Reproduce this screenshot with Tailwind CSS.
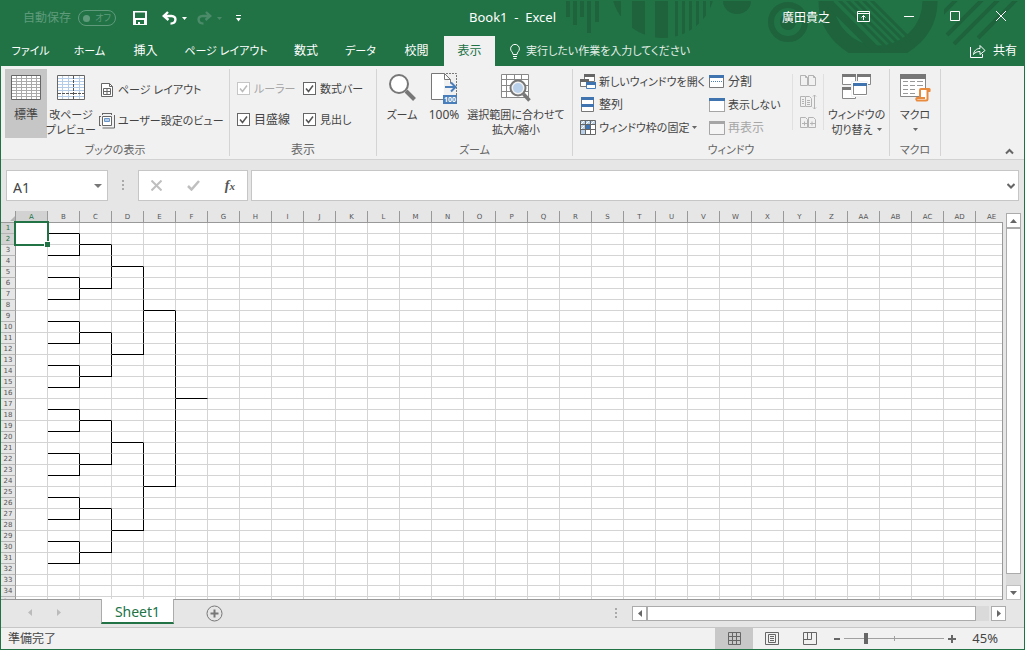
<!DOCTYPE html>
<html lang="ja">
<head>
<meta charset="utf-8">
<meta name="viewport" content="width=device-width, initial-scale=1">
<title>Book1 - Excel</title>
<script src="https://cdn.jsdelivr.net/npm/@tailwindcss/browser@4"></script>
</head>
<body class="h-screen overflow-hidden font-['Noto_Sans','Noto_Sans_CJK_JP',sans-serif] text-xs text-[#444] [font-feature-settings:'palt'] [&_button]:shrink-0 [&_svg]:shrink-0">
<div class="flex h-full flex-col border border-t-0 border-[#217346] bg-[#e6e6e6]">

  <header class="relative shrink-0 bg-[#217346] text-white">
    <svg class="absolute top-0 right-0 h-[66px] w-[474px]" viewBox="0 0 474 66" fill="#1e633c" aria-hidden="true">
      <defs>
        <clipPath id="bowl"><path d="M61 1H165V38H61Z"/></clipPath>
        <clipPath id="disc"><circle cx="113" cy="-14" r="52"/></clipPath>
        <clipPath id="flat"><path d="M260 1H400V53H260Z"/></clipPath>
        <clipPath id="inner"><path d="M270 1H374A46 46 0 0 1 328 53H310A60 60 0 0 1 270 16Z"/></clipPath>
        <clipPath id="slashes"><path d="M394 1H474V50H394Z"/></clipPath>
      </defs>
      <path d="M16 1h4v16h-4zM23 1h4v24h-4zM30 1h4v16h-4zM37 1h4v32h-4zM45 1h4v21h-4z"/>
      <g clip-path="url(#bowl)"><path clip-path="url(#disc)" d="M60 1h11v40H60zM82 1h13v40H82zM105 1h13v40h-13zM125 1h3v40h-3zM132 1h3v40h-3zM139 1h3v40h-3zM146 1h3v40h-3zM153 1h3v40h-3zM160 1h3v40h-3z"/></g>
      <path d="M173 1A14 13 0 0 0 201 1Z"/>
      <circle cx="238" cy="22" r="17" fill="none" stroke="#1e633c" stroke-width="6"/><circle cx="238" cy="22" r="8"/>
      <g clip-path="url(#flat)"><circle cx="328" cy="1" r="52" fill="none" stroke="#1e633c" stroke-width="15"/></g>
      <g clip-path="url(#inner)" stroke="#1e633c" fill="none"><path stroke-width="8" d="M274-2l60 60"/><path stroke-width="3" d="M287-2l58 58M295-2l58 58M303-2l56 56M311-2l54 54M319-2l50 50"/></g>
      <g clip-path="url(#slashes)" stroke="#1e633c" stroke-width="4"><path d="M392 14l16-16M397 35l36-36M404 44l48-48M428 38l40-40"/></g>
    </svg>

    <div class="relative flex h-9 items-center">
      <div class="flex h-full flex-1 items-center">
        <span class="ml-[22px] text-[#5f9b7b]">自動保存</span>
        <span class="ml-[7px] flex h-4 w-[38px] items-center justify-between rounded-full border border-[#5f9b7b] px-1 text-[9px] text-[#5f9b7b]"><span class="size-[7px] rounded-full bg-[#5f9b7b]"></span>オフ</span>
        <button aria-label="上書き保存" class="ml-[17px]"><svg class="size-[14px]" viewBox="0 0 14 14" fill="#fff"><path fill-rule="evenodd" d="M0 0h14v14H0zM2 1.500v5.500h10V1.500zM3 9v4h2v-2h2v2h4V9z"/></svg></button>
        <button aria-label="元に戻す" class="ml-[15px]"><svg class="h-[14px] w-[15px]" viewBox="0 0 15 14" fill="none" stroke="#fff" stroke-width="2.400"><path d="M6 1L1.800 5L6.500 9M2 5H9.500C15 5 14.800 12.500 8.500 12.600"/></svg></button>
        <svg class="ml-[5px] h-[3px] w-[5px]" viewBox="0 0 5 3" fill="#fff"><path d="M0 0h5L2.500 3z"/></svg>
        <button aria-label="やり直し" class="ml-[10px]"><svg class="h-[14px] w-[15px]" viewBox="0 0 15 14" fill="none" stroke="#4b8b69" stroke-width="2.400"><path d="M9 1L13.200 5L8.500 9M13 5H5.500C0 5 .2 12.500 6.500 12.600"/></svg></button>
        <svg class="ml-[5px] h-[3px] w-[5px]" viewBox="0 0 5 3" fill="#4b8b69"><path d="M0 0h5L2.500 3z"/></svg>
        <button aria-label="クイック アクセス ツール バーのユーザー設定" class="ml-[14px]"><svg class="h-[7px] w-[5px]" viewBox="0 0 5 7" fill="#fff"><path d="M0 0h5v1H0zM0 3h5L2.500 6.500z"/></svg></button>
      </div>
      <h1 class="text-[13px] whitespace-pre">Book1  -  Excel</h1>
      <div class="flex h-full flex-1 items-center justify-end">
        <span>廣田貴之</span>
        <div class="ml-[10px] flex h-full">
          <button aria-label="リボンの表示オプション" class="grid w-[46px] place-items-center pb-1"><svg class="h-[11px] w-[13px]" viewBox="0 0 13 11" fill="none" stroke="#fff"><path d="M.5.5h12v10H.5zM.5 2.500h12M6.500 9V4.500M4.500 6.500l2-2 2 2"/></svg></button>
          <button aria-label="最小化" class="grid w-[46px] place-items-center pb-1"><svg class="h-[10px] w-[10px]" viewBox="0 0 10 10" stroke="#fff"><path d="M0 5.500h10"/></svg></button>
          <button aria-label="最大化" class="grid w-[46px] place-items-center pb-1"><svg class="size-[10px]" viewBox="0 0 10 10" fill="none" stroke="#fff"><path d="M.5.5h9v9h-9z"/></svg></button>
          <button aria-label="閉じる" class="grid w-[46px] place-items-center pb-1"><svg class="size-[10px]" viewBox="0 0 10 10" stroke="#fff"><path d="M0 0l10 10M10 0L0 10"/></svg></button>
        </div>
      </div>
    </div>

    <nav class="relative flex h-[30px] items-stretch whitespace-nowrap">
      <button class="w-[59px] text-[11px]">ファイル</button>
      <button class="w-[59px] text-[11px]">ホーム</button>
      <button class="w-[53px]">挿入</button>
      <button class="w-[108px] text-[11px]">ページ レイアウト</button>
      <button class="w-[52px]">数式</button>
      <button class="w-[57px] text-[11px]">データ</button>
      <button class="w-[55px]">校閲</button>
      <button class="w-[51px] bg-[#f1f1f1] text-[#217346]">表示</button>
      <button class="ml-[15px] flex items-center gap-[6px] text-[11px] text-[#e4efe8]"><svg class="h-[15px] w-[10px]" viewBox="0 0 10 15" fill="none" stroke="#fff"><path d="M3 10.500C3 8 .6 7.500.6 4.800a4.400 4.400 0 0 1 8.800 0C9.400 7.500 7 8 7 10.500zM3 12.500h4M3.500 14.500h3"/></svg>実行したい作業を入力してください</button>
      <button class="mr-[7px] ml-auto flex items-center gap-[7px]"><svg class="h-[14px] w-[16px]" viewBox="0 0 16 14" fill="none" stroke="#fff"><path d="M.5 3v10.500h12V10M3.500 10.500C4 6.500 6.500 4.500 10 4.500V1.500l5 5-5 4v-3C7 7.500 5 8.500 3.500 10.500z"/></svg>共有</button>
    </nav>
  </header>

  <section aria-label="リボン" class="flex h-[94px] shrink-0 border-b border-[#d2d2d2] bg-[#f1f1f1] pt-[3px] text-[11px] leading-[15px] whitespace-nowrap">
    <div class="flex h-[87px] w-[229px] flex-col border-r border-[#d4d4d4]">
      <div class="flex flex-1 pl-1">
        <button class="flex h-[69px] w-[42px] flex-col items-center bg-[#c6c6c6] pt-[6px]">
          <svg class="h-[25px] w-[30px]" viewBox="0 0 30 25" fill="none"><path fill="#fff" stroke="#666" d="M.5.5h29v24H.5z"/><path stroke="#aaa" d="M1 3.500h28M1 6.500h28M1 9.500h28M1 12.500h28M1 15.500h28M1 18.500h28M1 21.500h28M5.500 1v23M10.500 1v23M15.500 1v23M20.500 1v23M25.500 1v23"/></svg>
          <span class="mt-[7px] text-xs leading-[15px]">標準</span>
        </button>
        <button class="ml-[2px] flex h-[69px] w-[44px] flex-col items-center pt-[6px]">
          <svg class="h-[25px] w-[28px]" viewBox="0 0 28 25" fill="none"><path fill="#fff" stroke="#666" d="M.5.5h27v24H.5z"/><path stroke="#b4cce8" d="M1 3.500h26M1 6.500h26M1 9.500h26M1 12.500h26M1 15.500h26M1 21.500h26M5.500 1v23M11.500 1v23M22.500 1v23"/><path stroke="#555" stroke-dasharray="3 1" d="M16.500 1v23M1 18.500h26"/></svg>
          <span class="mt-[7px]">改ページ<br>プレビュー</span>
        </button>
        <div class="ml-[6px] flex flex-col gap-4 pt-[13px]">
          <button class="flex h-[15px] items-center"><svg class="mr-[5px] ml-[2px] h-[14px] w-[12px]" viewBox="0 0 12 14" fill="none" stroke="#666"><path fill="#fff" d="M.5.5h8l3 3v10H.5z"/><path d="M8.500.5v3h3M2.500 5.500h7v6h-7zM6 5.500v6M2.500 8.500h7"/></svg>ページ レイアウト</button>
          <button class="flex h-[15px] items-center"><svg class="mr-[3px] h-[16px] w-[16px]" viewBox="0 0 16 16" fill="none" stroke="#666"><path fill="#fff" d="M3.500 3.500h9v9h-9z"/><path d="M3.500.5h9M3.500 0v2M12.500 0v2M.5 3.500v9M0 3.500h2M0 12.500h2M15.500 2v13h-12"/><path fill="#b4cce8" stroke="#6a94c8" d="M5.500 5.500h5v3h-5z"/></svg>ユーザー設定のビュー</button>
        </div>
      </div>
      <div class="pb-[1px] text-center leading-[10px] text-[#666]">ブックの表示</div>
    </div>

    <div class="flex h-[87px] w-[147px] flex-col border-r border-[#d4d4d4]">
      <div class="grid flex-1 grid-cols-[66px_1fr] content-start gap-y-4 pt-[12px] pl-[7px]">
        <label class="flex h-[15px] items-center gap-1 text-[#a6a6a6]"><span class="relative size-[13px]"><input type="checkbox" checked disabled class="block size-[13px] appearance-none border border-[#c6c6c6] bg-white"><svg class="pointer-events-none absolute inset-0" viewBox="0 0 13 13" fill="none" stroke="#bbb" stroke-width="1.500"><path d="M3 6.500l2.500 3L10 3.500"/></svg></span>ルーラー</label>
        <label class="flex h-[15px] items-center gap-1"><span class="relative size-[13px]"><input type="checkbox" checked class="block size-[13px] appearance-none border border-[#666] bg-white"><svg class="pointer-events-none absolute inset-0" viewBox="0 0 13 13" fill="none" stroke="#555" stroke-width="1.500"><path d="M3 6.500l2.500 3L10 3.500"/></svg></span>数式バー</label>
        <label class="flex h-[15px] items-center gap-1 text-xs"><span class="relative size-[13px]"><input type="checkbox" checked class="block size-[13px] appearance-none border border-[#666] bg-white"><svg class="pointer-events-none absolute inset-0" viewBox="0 0 13 13" fill="none" stroke="#555" stroke-width="1.500"><path d="M3 6.500l2.500 3L10 3.500"/></svg></span>目盛線</label>
        <label class="flex h-[15px] items-center gap-1"><span class="relative size-[13px]"><input type="checkbox" checked class="block size-[13px] appearance-none border border-[#666] bg-white"><svg class="pointer-events-none absolute inset-0" viewBox="0 0 13 13" fill="none" stroke="#555" stroke-width="1.500"><path d="M3 6.500l2.500 3L10 3.500"/></svg></span>見出し</label>
      </div>
      <div class="pb-[1px] text-center text-xs leading-[10px] text-[#666]">表示</div>
    </div>

    <div class="flex h-[87px] w-[196px] flex-col border-r border-[#d4d4d4]">
      <div class="flex flex-1 pl-1">
        <button class="flex w-[42px] flex-col items-center pt-1"><svg class="h-[28px] w-[28px]" viewBox="0 0 28 28" fill="none" stroke="#777"><circle cx="11" cy="11" r="9" fill="#fff" stroke-width="2"/><path stroke-width="4" d="M18 18l8.500 8.500"/></svg><span class="mt-[6px]">ズーム</span></button>
        <button class="flex w-[42px] flex-col items-center pt-1"><svg class="h-[31px] w-[27px]" viewBox="0 0 27 31" fill="none"><path fill="#fff" stroke="#777" d="M13.500.5H.5v26h12M13.500.5l6 6v4M13.500.5v6h6"/><path stroke="#777" stroke-dasharray="2 1" d="M15 .5h10.500V22"/><path stroke="#4a7ebb" stroke-width="2" d="M14 14h10M20 9.500l4.500 4.500-4.500 4.500"/><path fill="#4a7ebb" d="M12 22h14v9H12z"/><text x="19" y="29" text-anchor="middle" font-size="7" font-weight="700" fill="#fff">100</text></svg><span class="mt-[3px] text-xs leading-[15px]">100%</span></button>
        <button class="flex w-[102px] flex-col items-center pt-[5px]"><svg class="h-[28px] w-[30px]" viewBox="0 0 30 28" fill="none"><path fill="#fff" stroke="#888" d="M.5.5h27v23H.5zM.5 5.500h27M.5 11.500h27M.5 17.500h27M5.500.5v23M13.500.5v5M20.500.5v5"/><circle cx="17" cy="14" r="7.500" fill="#f1f1f1" stroke="#777" stroke-width="2"/><circle cx="17" cy="14" r="5" fill="#b9d0ea"/><path stroke="#777" stroke-width="3.500" d="M22.500 20l6 6.500"/></svg><span class="mt-[5px]">選択範囲に合わせて<br>拡大/縮小</span></button>
      </div>
      <div class="pb-[1px] text-center leading-[10px] text-[#666]">ズーム</div>
    </div>

    <div class="flex h-[87px] w-[317px] flex-col border-r border-[#d4d4d4]">
      <div class="flex flex-1 pl-[7px]">
        <div class="flex w-[129px] flex-col gap-2 pt-[5px]">
          <button class="flex h-[15px] items-center gap-[3px]"><svg class="h-[16px] w-[16px]" viewBox="0 0 16 16"><path fill="#fff" stroke="#777" d="M4.500 1.500h10v6h-10zM.5 6.500h8v6h-8z"/><path fill="#666" d="M4 0h11v3H4zM0 5h9v3H0z"/><path fill="#fff" stroke="#4a7ebb" d="M6.500 8.500h9v6h-9z"/><path fill="#3f74b0" d="M6 8h10v3H6z"/></svg>新しいウィンドウを開く</button>
          <button class="flex h-[15px] items-center gap-[3px] text-xs"><svg class="h-[16px] w-[16px]" viewBox="0 0 16 16"><path fill="#fff" stroke="#777" d="M1.500.5h12v14h-12z"/><path fill="#3f74b0" d="M1 0h13v3H1zM1 7h13v3H1z"/></svg>整列</button>
          <button class="flex h-[15px] items-center gap-[3px]"><svg class="h-[16px] w-[16px]" viewBox="0 0 16 16"><path fill="#fff" stroke="#666" d="M.5.5h15v14H.5zM.5 4.500h15M.5 9.500h15M5.500.5v14M10.500.5v14"/><path fill="#b9d0ea" d="M1 1h4v3H1zM6 1h4v3H6zM11 1h4v3h-4zM1 5h4v4H1zM1 10h4v4H1z"/><path stroke="#fff" d="M1 4l3-3M6 4l3-3M11 4l3-3M1 9l3-3"/><path fill="#3f74b0" d="M6 5h4v4H6z"/></svg>ウィンドウ枠の固定<svg class="h-[3px] w-[5px]" viewBox="0 0 5 3" fill="#666"><path d="M0 0h5L2.500 3z"/></svg></button>
        </div>
        <div class="flex w-[83px] flex-col gap-2 pt-[5px]">
          <button class="flex h-[15px] items-center gap-[3px] text-xs"><svg class="h-[13px] w-[16px]" viewBox="0 0 16 13"><path fill="#fff" stroke="#777" d="M.5.5h14v12H.5z"/><path fill="#3f74b0" d="M0 0h15v3H0z"/><path stroke="#4a7ebb" stroke-dasharray="1 1" d="M2 6.500h11"/></svg>分割</button>
          <button class="flex h-[15px] items-center gap-[3px]"><svg class="h-[14px] w-[16px]" viewBox="0 0 16 14"><path fill="#fff" stroke="#555" stroke-dasharray="1 1" d="M.5.5h15v13H.5z"/><path fill="#3f74b0" d="M0 0h16v3H0z"/></svg>表示しない</button>
          <button disabled class="flex h-[15px] items-center gap-[3px] text-xs text-[#a6a6a6]"><svg class="h-[14px] w-[16px]" viewBox="0 0 16 14"><path fill="#f5f5f5" stroke="#a6a6a6" d="M.5.5h15v13H.5z"/><path fill="#a6a6a6" d="M0 0h16v3H0z"/></svg>再表示</button>
        </div>
        <div class="mt-[5px] flex h-[56px] w-[32px] flex-col justify-between self-start border-x border-[#e0e0e0]">
          <button disabled aria-label="並べて比較" class="grid h-[14px] place-items-center"><svg class="h-[14px] w-[17px]" viewBox="0 0 17 14" fill="none" stroke="#b3b3b3"><path d="M.5 1.500h5l2 2v8h-7zM5.500 1.500v2h2M8.500 1.500h5l2 2v8h-7zM13.500 1.500v2h2"/></svg></button>
          <button disabled aria-label="同時にスクロール" class="grid h-[16px] place-items-center"><svg class="h-[16px] w-[17px]" viewBox="0 0 17 16" fill="none" stroke="#b3b3b3"><path d="M5 2.500H.5v10H5M5.500 2.500h4l2 2v8h-6zM7 6.500h3M7 8.500h3M7 10.500h3M2 5.500h2M2 7.500h2M2 9.500h2M14.500 1v14M13 2.500l1.500-1.500 1.500 1.500M13 13.500l1.500 1.500 1.500-1.500"/></svg></button>
          <button disabled aria-label="ウィンドウの位置を元に戻す" class="grid h-[14px] place-items-center"><svg class="h-[14px] w-[17px]" viewBox="0 0 17 14" fill="none" stroke="#b3b3b3"><path d="M.5 1.500h5l2 2v8h-7zM8.500 1.500h5l2 2v8h-7zM2 7.500h5M4.500 5.500v4M10 7.500h5M12 5.500v4"/></svg></button>
        </div>
        <button class="flex w-[65px] flex-col items-center pt-[5px]"><svg class="h-[25px] w-[29px]" viewBox="0 0 29 25"><path fill="#fff" stroke="#888" d="M.5.5h13v10H.5zM15.500.5h13v10h-13zM.5 13.500h13v11H.5z"/><path fill="#777" d="M0 0h14v3H0zM15 0h14v3H15zM0 13h14v3H0z"/><path fill="#fff" stroke="#f1f1f1" d="M9.500 7.500h16v15h-16z"/><path fill="#fff" stroke="#888" d="M11.500 9.500h13v11h-13z"/><path fill="#3f74b0" d="M11 9h14v3H11z"/></svg><span class="mt-[8px]">ウィンドウの</span><span class="flex items-center gap-1">切り替え<svg class="h-[3px] w-[5px]" viewBox="0 0 5 3" fill="#666"><path d="M0 0h5L2.500 3z"/></svg></span></button>
      </div>
      <div class="pb-[1px] text-center leading-[10px] text-[#666]">ウィンドウ</div>
    </div>

    <div class="flex h-[87px] w-[51px] flex-col border-r border-[#d4d4d4]">
      <button class="flex h-[76px] flex-col items-center pt-[5px]"><svg class="h-[28px] w-[31px]" viewBox="0 0 31 28"><path fill="#fff" stroke="#888" d="M.5.5h25v22H.5z"/><path fill="#777" d="M0 0h26v5H0z"/><path stroke="#999" d="M3 7.500h5M10 7.500h5M17 7.500h6M3 11.500h5M10 11.500h5M17 11.500h6M3 15.500h5M10 15.500h5M3 19.500h5M10 19.500h5"/><path fill="#fff" stroke="#e98b3e" stroke-width="2" d="M20 24V16q0-1 1-1h8q1 0 .5 2H27.500v8q0 1.500-1.500 1.500H17q-1.500-2 0-2.500h8"/></svg><span class="mt-[5px]">マクロ</span><svg class="mt-[6px] h-[3px] w-[5px]" viewBox="0 0 5 3" fill="#666"><path d="M0 0h5L2.500 3z"/></svg></button>
      <div class="pb-[1px] text-center leading-[10px] text-[#666]">マクロ</div>
    </div>
    <button aria-label="リボンを折りたたむ" class="mr-[10px] mb-[4px] ml-auto self-end"><svg class="h-[7px] w-[9px]" viewBox="0 0 9 7" fill="none" stroke="#666" stroke-width="2"><path d="M1 5.500L4.500 2 8 5.500"/></svg></button>
  </section>

  <section aria-label="数式バー" class="flex shrink-0 items-stretch px-[5px] pt-[10px] pb-[10px]">
    <div class="flex h-[31px] w-[102px] items-center border border-[#c6c6c6] bg-white pr-[5px]">
      <input aria-label="名前ボックス" value="A1" class="w-full min-w-0 bg-transparent pt-1 pl-[6px] text-sm outline-none">
      <button aria-label="名前の一覧"><svg class="h-[4px] w-[8px]" viewBox="0 0 8 4" fill="#777"><path d="M0 0h8L4 4z"/></svg></button>
    </div>
    <svg class="mx-[14px] h-[31px] w-[2px]" viewBox="0 0 2 31" fill="#aaa"><path d="M0 10h2v2H0zM0 14h2v2H0zM0 18h2v2H0z"/></svg>
    <div class="flex h-[31px] w-[110px] items-center justify-between border border-[#c6c6c6] bg-white px-3">
      <button aria-label="キャンセル"><svg class="size-[11px]" viewBox="0 0 11 11" stroke="#bfbfbf" stroke-width="2"><path d="M.5.5l10 10M10.500.5l-10 10"/></svg></button>
      <button aria-label="入力"><svg class="h-[11px] w-[13px]" viewBox="0 0 13 11" fill="none" stroke="#bfbfbf" stroke-width="2.500"><path d="M1 6l3.500 3.500L12 1"/></svg></button>
      <button aria-label="関数の挿入" class="font-['Liberation_Serif',serif] text-sm leading-4 font-bold text-[#555] italic">f<span class="text-[11px]">x</span></button>
    </div>
    <div class="ml-[3px] flex h-[31px] flex-1 items-center border border-[#c6c6c6] bg-white pr-[3px]">
      <input aria-label="数式" class="w-full min-w-0 bg-transparent px-1 text-sm outline-none">
      <button aria-label="数式バーの展開"><svg class="h-[6px] w-[8px]" viewBox="0 0 8 6" fill="none" stroke="#666" stroke-width="2"><path d="M.5 1L4 4.500 7.500 1"/></svg></button>
    </div>
  </section>

  <main class="flex min-h-0 flex-1">
    <div class="relative min-w-0 flex-1 overflow-hidden border-b border-[#999]">
      <table class="table-fixed border-separate border-spacing-0 text-center font-['DejaVu_Sans',sans-serif] text-[7px] leading-[10px] text-[#555]" id="sheet"></table>
      <div class="absolute top-[11px] right-0 bottom-0 w-px bg-[#999]"></div>
      <div class="absolute top-[10px] left-[13px] h-[25px] w-[35px] border-2 border-[#217346]"></div>
      <div class="absolute top-[30px] left-[43px] size-[6px] border border-r-0 border-b-0 border-white bg-[#217346]"></div>
    </div>
    <div class="mr-[3px] ml-[3px] flex w-[15px] flex-col pt-[2px]">
      <button aria-label="上へスクロール" class="grid h-[15px] place-items-center border border-[#ababab] bg-white"><svg class="h-[4px] w-[7px]" viewBox="0 0 7 4" fill="#666"><path d="M0 4h7L3.500 0z"/></svg></button>
      <div class="flex-1 bg-[#dadada] pb-[11px]"><div class="h-full border border-[#ababab] bg-white"></div></div>
      <button aria-label="下へスクロール" class="grid h-[15px] place-items-center border border-[#c0c0c0] bg-white"><svg class="h-[4px] w-[7px]" viewBox="0 0 7 4" fill="#666"><path d="M0 0h7L3.500 4z"/></svg></button>
    </div>
  </main>

  <div class="flex h-[27px] shrink-0">
    <div class="flex h-[25px] w-[100px] items-center">
      <button aria-label="前のシート" class="ml-[27px]"><svg class="h-[7px] w-[4px]" viewBox="0 0 4 7" fill="#bbb"><path d="M4 0v7L0 3.500z"/></svg></button>
      <button aria-label="次のシート" class="ml-[25px]"><svg class="h-[7px] w-[4px]" viewBox="0 0 4 7" fill="#bbb"><path d="M0 0v7l4-3.500z"/></svg></button>
    </div>
    <button class="relative -mt-px h-[25px] w-[73px] border-x border-b-2 border-x-[#ababab] border-b-[#217346] bg-white pt-[3px] text-sm text-[#217346]">Sheet1</button>
    <button aria-label="新しいシート" class="mt-[5px] ml-8 self-start"><svg class="size-[17px]" viewBox="0 0 17 17" fill="none" stroke="#777"><circle cx="8.500" cy="8.500" r="7.500"/><path stroke-width="2" d="M4.500 8.500h8M8.500 4.500v8"/></svg></button>
    <svg class="mt-[8px] ml-auto h-[10px] w-[2px]" viewBox="0 0 2 10" fill="#aaa"><path d="M0 0h2v2H0zM0 4h2v2H0zM0 8h2v2H0z"/></svg>
    <div class="mt-[6px] mr-[18px] ml-[15px] flex h-[15px] w-[374px]">
      <button aria-label="左へスクロール" class="grid w-[15px] place-items-center border border-[#ababab] bg-white"><svg class="h-[7px] w-[4px]" viewBox="0 0 4 7" fill="#666"><path d="M4 0v7L0 3.500z"/></svg></button>
      <div class="mr-[2px] flex-1 bg-[#dadada] pr-[13px]"><div class="h-full border border-[#ababab] bg-white"></div></div>
      <button aria-label="右へスクロール" class="grid w-[15px] place-items-center border border-[#ababab] bg-white"><svg class="h-[7px] w-[4px]" viewBox="0 0 4 7" fill="#666"><path d="M0 0v7l4-3.500z"/></svg></button>
    </div>
  </div>

  <footer class="flex h-[22px] shrink-0 items-stretch border-t border-[#c6c6c6] bg-[#f1f1f1]">
    <span class="ml-[7px] self-center">準備完了</span>
    <button aria-label="標準" class="ml-auto grid w-[38px] place-items-center bg-[#c8c8c8]"><svg class="size-[13px]" viewBox="0 0 13 13" fill="none" stroke="#666"><path d="M.5.5h12v12H.5zM4.500.5v12M8.500.5v12M.5 4.500h12M.5 8.500h12"/></svg></button>
    <button aria-label="ページ レイアウト" class="grid w-[38px] place-items-center"><svg class="h-[13px] w-[14px]" viewBox="0 0 14 13" fill="none" stroke="#666"><path d="M.5.5h13v12H.5zM3.500 2.500h7v8h-7zM5 4.500h4M5 6.500h4M5 8.500h4"/></svg></button>
    <button aria-label="改ページ プレビュー" class="grid w-[38px] place-items-center"><svg class="h-[13px] w-[14px]" viewBox="0 0 14 13" fill="none" stroke="#666"><path d="M.5.5h13v12H.5zM.5 7.500h8v-7M4.500.5v7"/></svg></button>
    <button aria-label="縮小" class="ml-[4px]"><svg class="size-[8px]" viewBox="0 0 8 8" fill="#666"><path d="M1 3h6v2H1z"/></svg></button>
    <div class="relative ml-[3px] flex w-[100px] items-center">
      <div class="absolute left-[50px] h-[5px] w-px bg-[#a0a0a0]"></div>
      <div class="absolute h-px w-full bg-[#a0a0a0]"></div>
      <input type="range" aria-label="ズーム" min="0" max="100" value="20" class="relative h-[11px] w-full appearance-none bg-transparent [&::-webkit-slider-thumb]:h-[11px] [&::-webkit-slider-thumb]:w-[4px] [&::-webkit-slider-thumb]:appearance-none [&::-webkit-slider-thumb]:bg-[#666]">
    </div>
    <button aria-label="拡大" class="ml-[4px]"><svg class="size-[8px]" viewBox="0 0 8 8" fill="#666"><path d="M0 3h8v2H0zM3 0h2v8H3z"/></svg></button>
    <button class="mr-[26px] ml-[16px] text-[13px]">45%</button>
  </footer>
</div>

<script>
const sheet = document.getElementById('sheet');
// Enough cells to fill the window around the ribbon, headings and scroll bars
const colCount = Math.ceil((innerWidth - 38) / 32);
const rowCount = Math.ceil((innerHeight - 273) / 11);
const colName = i => (i > 26 ? String.fromCharCode(64 + Math.floor((i - 1) / 26)) : '') + String.fromCharCode(65 + (i - 1) % 26);
sheet.style.width = 15 + colCount * 32 + 'px';

let html = '<thead><tr><th class="h-[12px] w-[15px] border-r border-b border-[#999] p-0"><svg class="mt-[3px] ml-auto size-[5px]" viewBox="0 0 5 5" fill="#b5b5b5"><path d="M5 0v5H0z"/></svg></th>';
for (let c = 1; c <= colCount; c++) {
  html += `<th class="h-[12px] w-[32px] border-r border-b border-[#999] p-0 font-normal ${c === 1 ? 'bg-[#d2d2d2] text-[#217346]' : 'bg-[#e6e6e6]'}">${colName(c)}</th>`;
}
html += '</tr></thead><tbody>';
for (let r = 1; r <= rowCount; r++) {
  html += `<tr><th class="h-[11px] border-r border-b border-r-[#999] border-b-[#b5b5b5] p-0 font-normal ${r < 3 ? 'bg-[#d2d2d2] text-[#217346]' : 'bg-[#e6e6e6]'}">${r}</th>`;
  for (let c = 1; c <= colCount; c++) {
    if (c === 1 && r <= 32) {
      // Column A holds one merged cell per team, two rows tall
      if (r % 2) html += '<td rowspan="2" class="border-r border-b border-[#d4d4d4] bg-white p-0"></td>';
      continue;
    }
    // Bracket rounds run from column B to F; the step doubles every round
    const step = 2 ** (c - 1), first = step / 2;
    const round = c >= 2 && c <= 6;
    const across = round && r <= 31 && (r - first) % step === 0;
    const span = Math.floor((r - 1 - first) / step);
    const down = round && c < 6 && r <= 31 && span >= 0 && span % 2 === 0;
    html += `<td class="border-r border-b bg-white p-0 ${down ? 'border-r-black' : 'border-r-[#d4d4d4]'} ${across ? 'border-b-black' : 'border-b-[#d4d4d4]'}"></td>`;
  }
  html += '</tr>';
}
sheet.innerHTML = html + '</tbody>';
</script>
</body>
</html>
